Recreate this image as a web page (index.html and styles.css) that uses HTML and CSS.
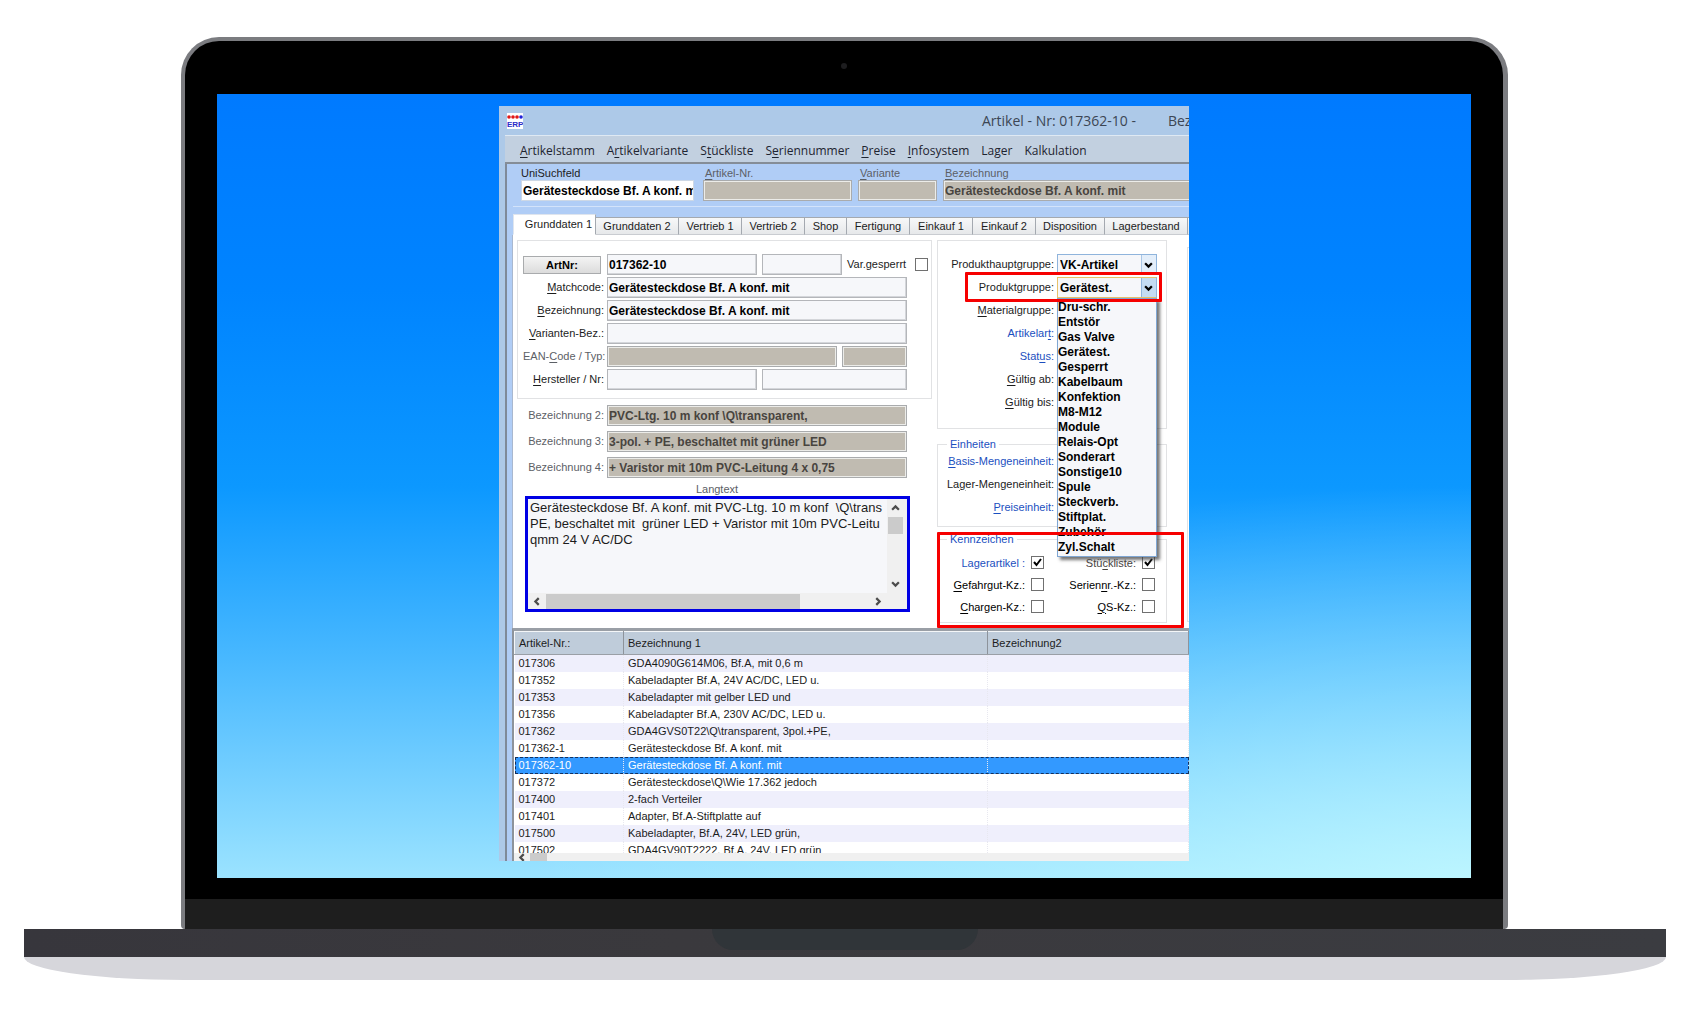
FILE: index.html
```html
<!DOCTYPE html>
<html lang="de">
<head>
<meta charset="utf-8">
<title>Artikel - Nr: 017362-10</title>
<link rel="stylesheet" href="styles.css">
</head>
<body>
<main class="laptop">
  <div class="lid">
    <div class="bezel-top"><span class="camera"></span></div>
    <div class="screen">
      <section class="window">
        <header class="titlebar">
          <svg class="app-icon" viewBox="0 0 16 16" aria-hidden="true">
            <rect width="16" height="16" fill="#fff"/>
            <circle cx="2" cy="4" r="1.8" fill="#e01818"/><circle cx="6" cy="4" r="1.8" fill="#e01818"/><circle cx="10" cy="4" r="1.8" fill="#e01818"/><circle cx="14" cy="4" r="1.8" fill="#2020d8"/>
            <text x="0" y="14" class="icon-text">ERP</text>
          </svg>
          <h1 class="title"><span>Artikel - Nr: 017362-10 -</span><span>Bez:</span></h1>
        </header>
        <div class="frame">
          <nav class="menubar">
            <a href="#"><u>A</u>rtikelstamm</a>
            <a href="#">A<u>r</u>tikelvariante</a>
            <a href="#">S<u>t</u>ückliste</a>
            <a href="#">S<u>e</u>riennummer</a>
            <a href="#"><u>P</u>reise</a>
            <a href="#"><u>I</u>nfosystem</a>
            <a href="#">Lager</a>
            <a href="#">Kalkulation</a>
          </nav>
          <div class="client">
            <form class="search">
              <div class="search-box">
                <div class="search-field"><label for="uni">UniSuchfeld</label><input id="uni" class="field white" value="Gerätesteckdose Bf. A konf. mit"></div>
                <div class="search-field dim"><label for="s-nr"><u>A</u>rtikel-Nr.</label><input id="s-nr" class="field off" readonly></div>
                <div class="search-field dim"><label for="s-var"><u>V</u>ariante</label><input id="s-var" class="field off" readonly></div>
                <div class="search-field dim"><label for="s-bez"><u>B</u>ezeichnung</label><input id="s-bez" class="field off" readonly value="Gerätesteckdose Bf. A konf. mit"></div>
              </div>
            </form>
            <div class="tabs" role="tablist">
              <button class="tab active w83">Grunddaten 1</button>
              <button class="tab w83">Grunddaten 2</button>
              <button class="tab w63">Vertrieb 1</button>
              <button class="tab w63">Vertrieb 2</button>
              <button class="tab w42">Shop</button>
              <button class="tab w63">Fertigung</button>
              <button class="tab w63">Einkauf 1</button>
              <button class="tab w63">Einkauf 2</button>
              <button class="tab w69">Disposition</button>
              <button class="tab w83">Lagerbestand</button>
              <button class="tab w83" aria-label="Weitere"></button>
            </div>
            <div class="page">
              <div class="col-left">
                <div class="group master">
                  <div class="row"><button class="artnr">ArtNr:</button><input class="field w150" aria-label="ArtNr" value="017362-10"><input class="field w80" aria-label="Variante"><label class="locked" for="locked">Var.gesperrt</label><input type="checkbox" class="check" id="locked"></div>
                  <div class="row"><label for="match"><u>M</u>atchcode:</label><input id="match" class="field w300" value="Gerätesteckdose Bf. A konf. mit"></div>
                  <div class="row"><label for="bez"><u>B</u>ezeichnung:</label><input id="bez" class="field w300" value="Gerätesteckdose Bf. A konf. mit"></div>
                  <div class="row"><label for="vbez"><u>V</u>arianten-Bez.:</label><input id="vbez" class="field w300"></div>
                  <div class="row"><label for="ean" class="dim">EAN-<u>C</u>ode / Typ:</label><input id="ean" class="field off w230" readonly><input class="field off w65" aria-label="Typ" readonly></div>
                  <div class="row"><label for="her"><u>H</u>ersteller / Nr:</label><input id="her" class="field w150"><input class="field w145" aria-label="Nr"></div>
                </div>
                <div class="extra">
                  <div class="row"><label for="b2" class="dim">Bezeichnung 2:</label><input id="b2" class="field off w300" readonly value="PVC-Ltg. 10 m konf \Q\transparent,"></div>
                  <div class="row"><label for="b3" class="dim">Bezeichnung 3:</label><input id="b3" class="field off w300" readonly value="3-pol. + PE, beschaltet mit grüner LED"></div>
                  <div class="row"><label for="b4" class="dim">Bezeichnung 4:</label><input id="b4" class="field off w300" readonly value="+ Varistor mit 10m PVC-Leitung 4 x 0,75"></div>
                </div>
                <label class="long-label dim" for="long">Langtext</label>
                <div class="long">
                  <textarea id="long" wrap="off">Gerätesteckdose Bf. A konf. mit PVC-Ltg. 10 m konf  \Q\trans
PE, beschaltet mit  grüner LED + Varistor mit 10m PVC-Leitu
qmm 24 V AC/DC</textarea>
                  <div class="vbar">
                    <svg viewBox="0 0 8 8"><path d="M1 6L4 3L7 6"/></svg><span class="thumb"></span>
                    <svg viewBox="0 0 8 8"><path d="M1 2L4 5L7 2"/></svg>
                  </div>
                  <div class="hbar">
                    <svg viewBox="0 0 8 8"><path d="M6 1L3 4L6 7"/></svg><span class="thumb"></span>
                    <svg viewBox="0 0 8 8"><path d="M2 1L5 4L2 7"/></svg>
                  </div>
                </div>
              </div>
              <div class="col-right">
                <div class="group product">
                  <div class="row"><label for="haupt">Produkthauptgruppe:</label>
                    <span class="combo"><select id="haupt"><option>VK-Artikel</option></select><svg viewBox="0 0 8 8"><path d="M1 2L4 5L7 2"/></svg></span></div>
                  <div class="row"><label for="grp">Produktgruppe:</label>
                    <span class="combo focus"><select id="grp"><option>Gerätest.</option></select><svg viewBox="0 0 8 8"><path d="M1 2L4 5L7 2"/></svg>
                      <ul class="list" role="listbox">
                        <li>Dru-schr.</li><li>Entstör</li><li>Gas Valve</li><li>Gerätest.</li><li>Gesperrt</li><li>Kabelbaum</li><li>Konfektion</li><li>M8-M12</li><li>Module</li><li>Relais-Opt</li><li>Sonderart</li><li>Sonstige10</li><li>Spule</li><li>Steckverb.</li><li>Stiftplat.</li><li>Zubehör</li><li>Zyl.Schalt</li>
                      </ul></span>
                    <span class="mark mark-row"></span></div>
                  <div class="row"><span class="label"><u>M</u>aterialgruppe:</span></div>
                  <div class="row blue"><span class="label">Artikelar<u>t</u>:</span></div>
                  <div class="row blue"><span class="label">Stat<u>u</u>s:</span></div>
                  <div class="row"><span class="label"><u>G</u>ültig ab:</span></div>
                  <div class="row"><span class="label"><u>G</u>ültig bis:</span></div>
                </div>
                <fieldset class="group units">
                  <legend>Einheiten</legend>
                  <div class="row blue"><span class="label"><u>B</u>asis-Mengeneinheit:</span></div>
                  <div class="row"><span class="label">La<u>g</u>er-Mengeneinheit:</span></div>
                  <div class="row blue"><span class="label"><u>P</u>reiseinheit:</span></div>
                </fieldset>
                <fieldset class="group flags">
                  <legend>Kennzeichen</legend>
                  <label class="blue" for="k1">Lagerartikel :</label><input type="checkbox" class="check" id="k1" checked>
                  <label class="dim" for="k2">Stü<u>c</u>kliste:</label><input type="checkbox" class="check" id="k2" checked>
                  <label for="k3"><u>G</u>efahrgut-Kz.:</label><input type="checkbox" class="check" id="k3">
                  <label for="k4">Serien<u>n</u>r.-Kz.:</label><input type="checkbox" class="check" id="k4">
                  <label for="k5"><u>C</u>hargen-Kz.:</label><input type="checkbox" class="check" id="k5">
                  <label for="k6"><u>Q</u>S-Kz.:</label><input type="checkbox" class="check" id="k6">
                  <span class="mark mark-flags"></span>
                </fieldset>
              </div>
              <div class="group next"></div>
            </div>
            <div class="grid-pane">
              <div class="grid-view">
              <table class="grid">
                <colgroup><col class="c-nr"><col class="c-bez"><col></colgroup>
                <thead><tr><th>Artikel-Nr.:</th><th>Bezeichnung 1</th><th>Bezeichnung2</th></tr></thead>
                <tbody>
                  <tr><td>017306</td><td>GDA4090G614M06, Bf.A, mit 0,6 m</td><td></td></tr>
                  <tr><td>017352</td><td>Kabeladapter Bf.A, 24V AC/DC, LED u.</td><td></td></tr>
                  <tr><td>017353</td><td>Kabeladapter mit gelber LED und</td><td></td></tr>
                  <tr><td>017356</td><td>Kabeladapter Bf.A, 230V AC/DC, LED u.</td><td></td></tr>
                  <tr><td>017362</td><td>GDA4GVS0T22\Q\transparent, 3pol.+PE,</td><td></td></tr>
                  <tr><td>017362-1</td><td>Gerätesteckdose Bf. A konf. mit</td><td></td></tr>
                  <tr class="selected"><td>017362-10</td><td>Gerätesteckdose Bf. A konf. mit</td><td></td></tr>
                  <tr><td>017372</td><td>Gerätesteckdose\Q\Wie 17.362 jedoch</td><td></td></tr>
                  <tr><td>017400</td><td>2-fach Verteiler</td><td></td></tr>
                  <tr><td>017401</td><td>Adapter, Bf.A-Stiftplatte auf</td><td></td></tr>
                  <tr><td>017500</td><td>Kabeladapter, Bf.A, 24V, LED grün,</td><td></td></tr>
                  <tr><td>017502</td><td>GDA4GV90T2222, Bf.A, 24V, LED grün</td><td></td></tr>
                </tbody>
              </table>
              </div>
              <div class="grid-scroll"><svg viewBox="0 0 8 8"><path d="M6 1L3 4L6 7"/></svg><span class="thumb"></span></div>
            </div>
          </div>
        </div>
      </section>
    </div>
    <div class="chin"></div>
  </div>
  <div class="base"><span class="notch"></span></div>
  <div class="foot"></div>
</main>
</body>
</html>
```
FILE: styles.css
```css
* { box-sizing: border-box; }
body {
  margin: 0;
  background: #fff;
  color: #1c1c1c;
  font: 11px/14px "Liberation Sans", Arial, sans-serif;
}
input, button, select, textarea { font: inherit; color: inherit; margin: 0; border-radius: 0; }
u { text-underline-offset: 2px; }

/* device */
.laptop { padding: 37px 21px 0 24px; overflow: hidden; }
.lid {
  margin: 0 158px 0 157px;
  border: solid #7b7c80;
  border-width: 4px 5px 0 4px;
  border-radius: 38px 38px 4px 4px;
  background: #000;
  overflow: hidden;
}
.bezel-top { height: 53px; display: flex; justify-content: center; padding-top: 22px; }
.camera { width: 6px; height: 6px; border-radius: 50%; background: #1d1d1f; }
.screen {
  margin: 0 32px;
  padding: 12px 0 17px;
  display: flex;
  justify-content: center;
  background:
    radial-gradient(ellipse 75% 50% at 100% 100%, rgba(205,255,255,.65), rgba(200,255,255,0)),
    linear-gradient(#007aff 0, #0084ff 25%, #0c98ff 50%, #48b8ff 72%, #9be3ff 100%);
}
.chin { height: 30px; margin-top: 21px; background: #1e1e1e; }
.base {
  height: 28px;
  display: flex;
  justify-content: center;
  background: linear-gradient(to right, #37363c, #3a393d 40%, #3b3c41);
}
.notch { width: 266px; height: 21px; border-radius: 0 0 22px 22px; background: #303539; }
.foot { height: 23px; border-radius: 0 0 160px 160px / 0 0 23px 23px; background: #d6d6db; }

/* application window */
.window {
  flex: 0 1 690px;
  height: 755px;
  overflow: hidden;
  display: flex;
  flex-direction: column;
  background: #adc9e8;
  white-space: nowrap;
}
.titlebar { height: 29px; flex: none; display: flex; align-items: center; padding-left: 8px; }
.app-icon { width: 16px; height: 16px; flex: none; }
.icon-text { font: bold 8px "Liberation Sans", sans-serif; fill: #2c2cc8; }
.title {
  margin: 0 0 0 459px;
  display: flex;
  gap: 32px;
  font: 14px/20px "Open Sans", sans-serif;
  color: #3c4654;
}
.frame { flex: 1; min-height: 0; margin-left: 6px; display: flex; flex-direction: column; border-top: 1px solid #dfe9f3; }
.menubar {
  height: 28px;
  flex: none;
  display: flex;
  align-items: center;
  gap: 12px;
  padding: 4px 0 0 15px;
  background: #c2d0e0;
  border-bottom: 2px solid #858d97;
}
.menubar a { color: #1e2430; text-decoration: none; font: 12px/18px "Open Sans", sans-serif; }
.client { flex: 1; min-height: 0; display: flex; flex-direction: column; border-left: 2px solid #7f8a99; background: #b0cdf6; }

/* fields */
.field {
  height: 21px;
  min-width: 0;
  padding: 0 0 0 1px;
  border: 1px solid #b4b6ba;
  box-shadow: inset -1px -1px #d4d6da;
  background: #f6f7fa;
  font-weight: bold;
  font-size: 12px;
  color: #000;
}
.field.off { background: #c0bbb1; color: #48443f; border: 1px solid #a9abad; box-shadow: inset 0 0 0 1px #ecece9; }
.field.white { background: #fff; border: 1px solid #cdd8e6; box-shadow: none; }
.dim { color: #5c6066; }
.blue { color: #1b4fc0; }

.search { padding: 2px 0 7px 6px; }
.search-box { display: grid; grid-template-columns: 176px 149px 79px 300px; gap: 6px; padding-left: 8px; border-bottom: 1px solid #d3e3fa; padding-bottom: 5px; }
.search-field { display: flex; flex-direction: column; }
.search-field.dim label { padding-left: 2px; }
.search-field .white { width: 173px; }

/* tabs */
.tabs { display: flex; align-items: flex-end; padding-left: 6px; height: 21px; flex: none; }
.tab {
  flex: none;
  height: 18px;
  padding: 0;
  border: 1px solid #a4a9b0;
  border-left-width: 0;
  border-bottom-color: #c9ccd1;
  background: linear-gradient(#f7f8f9, #e6e8ea);
  text-align: center;
}
.tab.active { height: 21px; padding: 0 0 2px 8px; background: #fff; border-color: #dfe5ee #a4a9b0 #fff #dfe5ee; border-left-width: 1px; }
.w83 { width: 83px; }
.w69 { width: 69px; }
.w63 { width: 63px; }
.w42 { width: 42px; }

/* form page */
.page { display: flex; gap: 5px; height: 393px; flex: none; margin-left: 5px; padding: 5px 4px 0; background: #fff; border-left: 1px solid #a9b8cf; }
.group { margin: 0; border: 1px solid #e1e2e4; }
.row { position: relative; display: flex; gap: 5px; height: 21px; align-items: center; }
.row + .row { margin-top: 2px; }
.row label, .label { padding-bottom: 2px; }
.col-left { width: 415px; flex: none; }
.master { padding: 13px 3px 8px 5px; }
.master .row > label:first-child, .extra label { width: 81px; text-align: right; margin-right: -2px; }
.artnr { width: 78px; height: 18px; margin-right: 1px; padding: 0; border: 1px solid #a9abad; background: linear-gradient(#f4f4f4, #dcdcdc); font-weight: bold; color: #000; }
.w300 { width: 300px; }
.w230 { width: 230px; }
.w150 { width: 150px; }
.w145 { width: 145px; }
.w80 { width: 80px; }
.w65 { width: 65px; }
.locked { margin-right: auto; }
.check {
  appearance: none;
  width: 13px;
  height: 13px;
  flex: none;
  border: 1px solid #707070;
  background: #fff;
}
.check:checked { background: #fff url("data:image/svg+xml,%3Csvg xmlns='http://www.w3.org/2000/svg' viewBox='0 0 11 11'%3E%3Cpath d='M2 5l2.500 3L9 2' fill='none' stroke='%23000' stroke-width='2'/%3E%3C/svg%3E"); }
.extra { padding: 6px 0 0 6px; }
.extra .row + .row { margin-top: 5px; }
.long-label { display: block; width: 400px; text-align: center; margin-top: 4px; }
.long {
  width: 385px;
  height: 116px;
  margin-left: 8px;
  display: grid;
  grid-template: 1fr 16px / 1fr 20px;
  border: 3px solid #0000e4;
  background: #f0f0f0;
}
.long textarea {
  border: 0;
  padding: 1px 0 0 2px;
  resize: none;
  overflow: hidden;
  white-space: pre;
  background: #f6f7fa;
  font-size: 13px;
  line-height: 16px;
  color: #1c1c1c;
}
.thumb { background: #cbcbcb; }
.vbar, .hbar, .grid-scroll { display: flex; align-items: center; background: #f0f0f0; }
.vbar { flex-direction: column; padding: 4px 4px 4px 0; }
.vbar .thumb { width: 15px; height: 17px; margin: 5px 0 auto; }
.hbar { padding: 0 4px; }
.hbar .thumb { height: 15px; width: 254px; margin: 0 auto 0 5px; }
.vbar svg, .hbar svg, .grid-scroll svg, .combo svg { width: 9px; height: 9px; flex: none; fill: none; stroke: #4c4c4c; stroke-width: 2; }

.col-right { width: 230px; flex: none; position: relative; }
.product { height: 189px; padding-top: 13px; }
.product label, .label { width: 116px; text-align: right; }
.product .row { gap: 3px; }
.combo { position: relative; width: 100px; height: 21px; }
.combo select { appearance: none; width: 100%; height: 100%; padding: 0 0 0 2px; border: 1px solid #8fb4dc; background: linear-gradient(to right, #f6f7fa 83px, #a9c6e6 83px 84px, #e3eefa 84px); font-weight: bold; font-size: 12px; color: #000; }
.combo.focus select { border-color: #e8c26a #8fb4dc #e8c26a #e8c26a; background: linear-gradient(to right, #f6f7fa 83px, #8fb4dc 83px 84px, #c4dcf3 84px); }
.combo svg { position: absolute; right: 4px; top: 7px; stroke: #000; pointer-events: none; }
.list {
  position: absolute;
  z-index: 2;
  top: 21px;
  left: 0;
  width: 100px;
  margin: 0;
  padding: 1px 0;
  list-style: none;
  border: 1px solid #7fa6d3;
  background: #f6f7fa;
  box-shadow: 3px 3px 3px rgba(60,60,60,.7);
  font-weight: bold;
  font-size: 12px;
  line-height: 15px;
  color: #000;
}
.mark { position: absolute; z-index: 3; border: 3px solid #f60000; border-radius: 1px; pointer-events: none; }
.mark-row { left: 27px; top: -5px; width: 197px; height: 30px; }
.mark-flags { left: -1px; top: -14px; width: 247px; height: 96px; }
fieldset.group { min-width: 0; padding: 0; position: relative; }
legend { margin-left: 9px; padding: 0 3px; color: #1b4fc0; }
.units { margin-top: 8px; height: 90px; }
.flags { margin-top: 5px; height: 91px; display: grid; grid-template-columns: 87px 13px 86px 13px; grid-auto-rows: 13px; gap: 9px 6px; align-content: start; align-items: center; }
fieldset.flags { padding-top: 10px; }
.flags label { text-align: right; color: #000; }
.flags .blue { color: #1b4fc0; }
.flags .dim { color: #48443f; }
.next { width: 60px; flex: none; margin: 7px 0 6px 15px; }

/* article grid */
.grid-pane { flex: 1; min-height: 0; display: flex; flex-direction: column; margin-left: 5px; background: #fff; border-left: 2px solid #8d939b; border-top: 3px solid #9a9fa6; }
.grid-view { flex: 1; min-height: 0; overflow: hidden; }
.grid { width: 100%; table-layout: fixed; border-collapse: collapse; }
.c-nr { width: 109px; }
.c-bez { width: 364px; }
.grid th { height: 23px; padding: 0 0 0 4px; text-align: left; font-weight: normal; background: #bfccda; border: 1px solid #f4f6f8; border-right: 1px solid #8d939b; border-bottom-color: #9a9fa6; }
.grid td { height: 17px; padding: 0 0 0 4px; line-height: 15px; border-right: 1px dotted #e8e8f0; }
.grid tbody tr:nth-child(odd) { background: #efeffc; }
.grid tbody tr.selected { background: #3399ff; color: #fff; outline: 1px dashed #14305c; outline-offset: -1px; }
.grid-scroll { height: 8px; flex: none; align-items: flex-start; padding-left: 3px; gap: 4px; overflow: hidden; }
.grid-scroll .thumb { width: 17px; height: 8px; }
```
